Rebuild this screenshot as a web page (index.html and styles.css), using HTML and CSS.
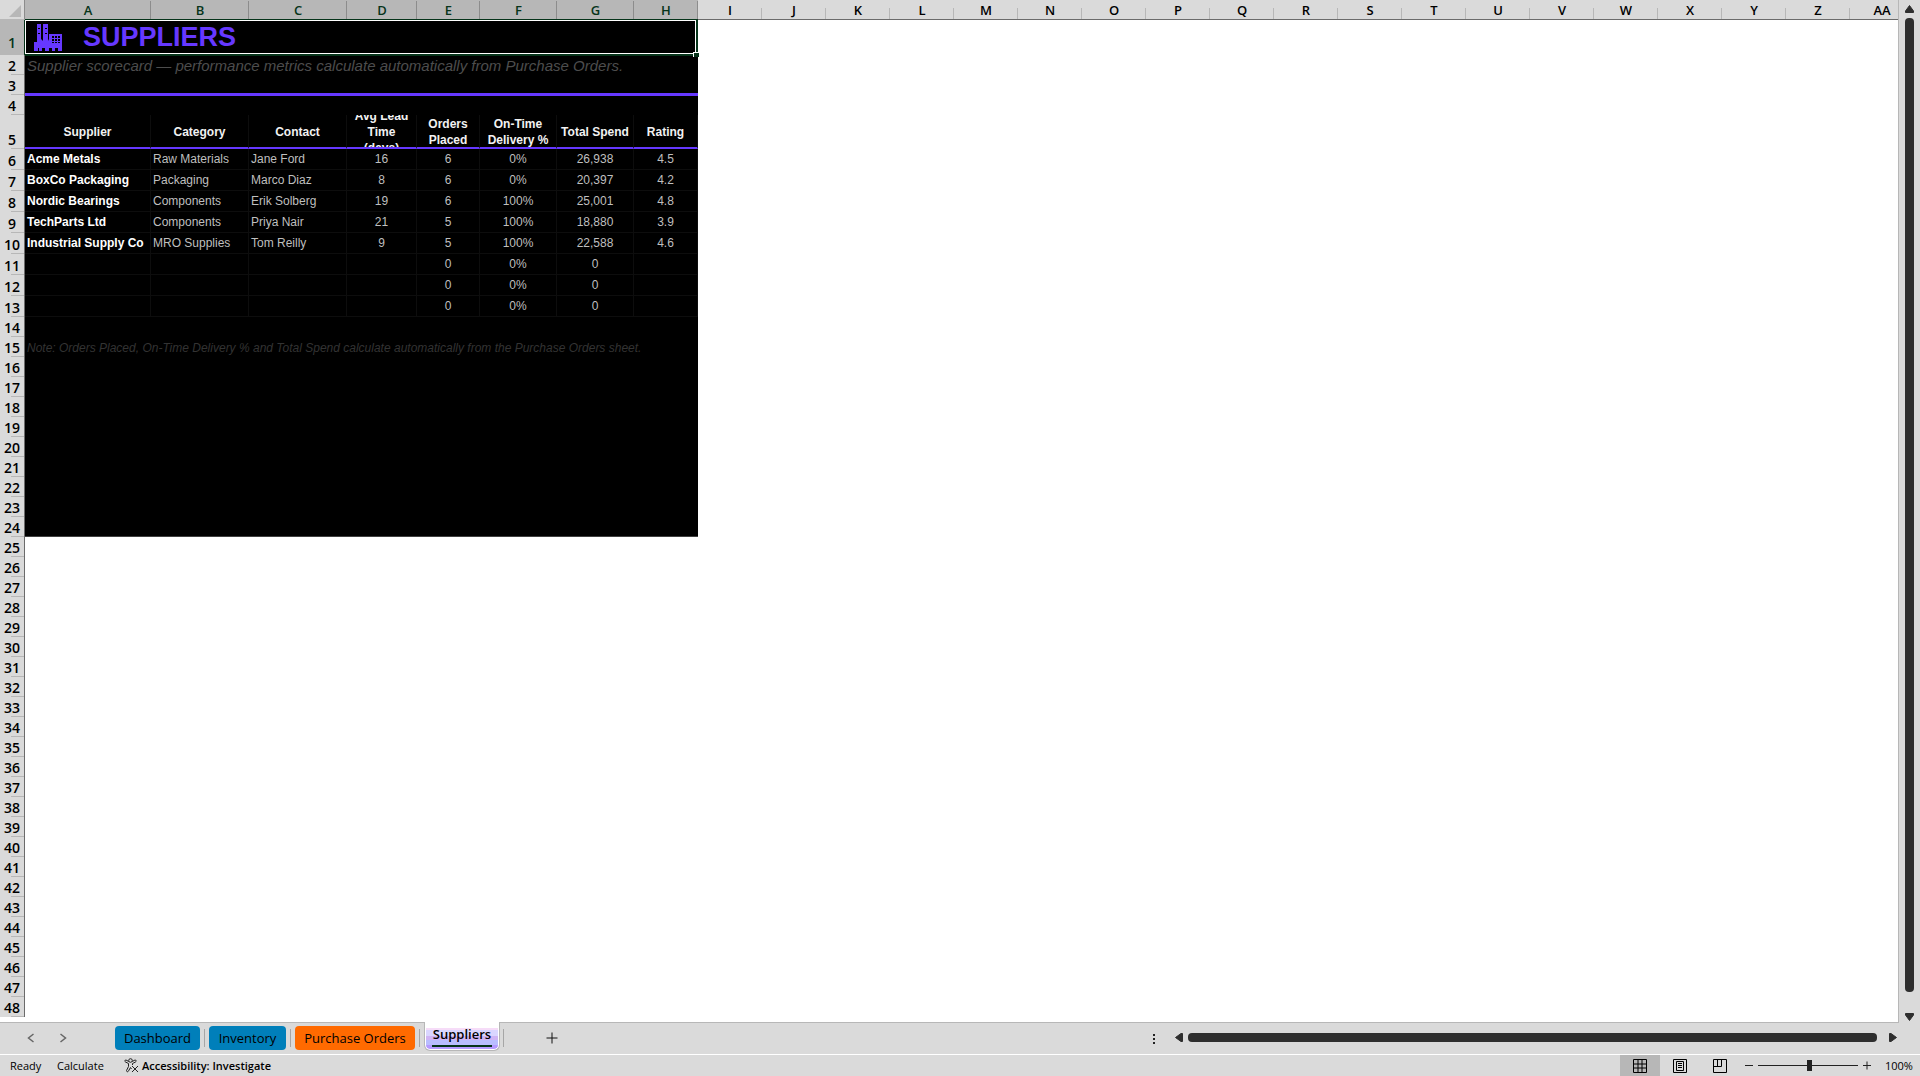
FILE: index.html
```
<!DOCTYPE html>
<html lang="en">
<head>
    <meta charset="UTF-8">
    <meta name="viewport" content="width=device-width, initial-scale=1.0">
    <title>Suppliers</title>
    <link rel="stylesheet" href="styles.css">
</head>
<body>

    <div class="workbook">
        <div class="sheet-area">
            <div class="grid-view">
                <table class="grid">
                    <colgroup id="grid-cols"></colgroup>
                    <thead>
                        <tr id="col-headers"></tr>
                    </thead>
                    <tbody id="grid-body"></tbody>
                </table>
            </div>

            <!-- Vertical scroll bar -->
            <div class="vscroll">
                <button class="arrow" aria-label="Scroll up"><svg width="9" height="8" viewBox="0 0 9 8"><path d="M4.500 0.500L8.500 6V7.500H0.500V6Z"/></svg></button>
                <div class="vthumb"></div>
                <button class="arrow" aria-label="Scroll down"><svg width="9" height="8" viewBox="0 0 9 8"><path d="M4.500 7.500L8.500 2V0.500H0.500V2Z"/></svg></button>
            </div>
        </div>

        <!-- Sheet tabs -->
        <div class="tab-bar">
            <div class="tab-nav">
                <button aria-label="Previous sheet"><svg width="8" height="10" viewBox="0 0 8 10"><path d="M6.500 1L1.500 5L6.500 9"/></svg></button>
                <button aria-label="Next sheet"><svg width="8" height="10" viewBox="0 0 8 10"><path d="M1.500 1L6.500 5L1.500 9"/></svg></button>
            </div>
            <div class="tabs">
                <button class="tab blue dashboard">Dashboard</button>
                <button class="tab blue inventory">Inventory</button>
                <button class="tab orange purchase">Purchase Orders</button>
                <button class="tab active"><span>Suppliers</span></button>
            </div>
            <button class="add-sheet" aria-label="New sheet"><svg width="12" height="12" viewBox="0 0 12 12"><path d="M6 0.500V11.500M0.500 6H11.500"/></svg></button>
            <div class="hscroll">
                <span class="grip"><i></i><i></i><i></i></span>
                <button class="arrow" aria-label="Scroll left"><svg width="8" height="9" viewBox="0 0 8 9"><path d="M0.500 4.500L6 0.500H7.500V8.500H6Z"/></svg></button>
                <div class="hthumb"></div>
                <button class="arrow" aria-label="Scroll right"><svg width="8" height="9" viewBox="0 0 8 9"><path d="M7.500 4.500L2 0.500H0.500V8.500H2Z"/></svg></button>
            </div>
        </div>

        <!-- Status bar -->
        <div class="status-bar">
            <span class="status-ready">Ready</span>
            <span class="status-calc">Calculate</span>
            <button class="accessibility">
                <svg width="15" height="15" viewBox="0 0 15 15"><circle cx="6.500" cy="2.500" r="1.800"/><path d="M4.800 3.500L2 2C0.500 2 0.500 3.500 1.500 4L4.500 5.500V8.500L2.500 12.500C2.500 14 4 14.200 4.500 13L6.500 9.500L7.500 11M8.200 3.500L11 2C12.500 2 12.500 3.500 11.500 4L8.500 5.500V7M8 8L14 14M14 8L8 14"/></svg>
                Accessibility: Investigate
            </button>
            <div class="views">
                <button class="view selected" aria-label="Normal"><svg width="14" height="14" viewBox="0 0 14 14"><path d="M0.500 0.500H13.500V13.500H0.500ZM5 0.500V13.500M9 0.500V13.500M0.500 5H13.500M0.500 9H13.500"/></svg></button>
                <button class="view" aria-label="Page Layout"><svg width="14" height="14" viewBox="0 0 14 14"><path d="M0.500 0.500H13.500V13.500H0.500ZM3.500 2.500H10.500V11.500H3.500ZM5 4.500H9M5 6.500H9M5 8.500H9"/></svg></button>
                <button class="view" aria-label="Page Break Preview"><svg width="14" height="14" viewBox="0 0 14 14"><path d="M0.500 0.500H13.500V13.500H0.500ZM4.500 0.500V7.500M0.500 7.500H8.500V0.500"/></svg></button>
            </div>
            <button class="zoom-btn" aria-label="Zoom out"><svg width="8" height="9" viewBox="0 0 8 9"><path d="M0 4.500H8"/></svg></button>
            <input class="zoom-slider" type="range" min="0" max="100" value="52" aria-label="Zoom">
            <button class="zoom-btn" aria-label="Zoom in"><svg width="8" height="9" viewBox="0 0 8 9"><path d="M0 4.500H8M4 0.500V8.500"/></svg></button>
            <span class="zoom-level">100%</span>
        </div>
    </div>

    <template id="title-icon">
        <svg class="factory" width="28" height="27" viewBox="0 0 28 27">
            <path fill="#6638ff" fill-rule="evenodd" d="M3 0H7V15L9 17V0H14V15L15 17V10H28V27H24V24H21V27H18V24H15V27H11V24H8V27H5V24H4V27H0V18H3ZM4 4V5H6V4ZM4 9V10H6V9ZM11 4V5H13V4ZM11 9V10H13V9ZM18 12V14H20V12ZM21 12V14H23V12ZM24 12V14H26V12ZM18 15V17H20V15ZM21 15V17H23V15ZM24 15V17H26V15ZM18 18V19H20V18ZM21 18V19H23V18ZM24 18V19H26V18Z"/>
        </svg>
    </template>

    <script src="script.js"></script>

</body>
</html>
```
FILE: styles.css
```
* {
    box-sizing: border-box;
}
body {
    margin: 0;
    font-family: "Open Sans", "Noto Sans", sans-serif;
    background-color: #dadada;
    color: #000;
    overflow: hidden;
}
button {
    padding: 0;
    border: none;
    background: none;
    font: inherit;
    color: inherit;
    cursor: pointer;
}
svg {
    display: block;
    fill: none;
    stroke: #222;
}
.workbook {
    display: flex;
    flex-direction: column;
    height: 100vh;
}

/* Grid */
.sheet-area {
    flex: 1;
    min-height: 0;
    display: flex;
}
.grid-view {
    flex: 1;
    min-width: 0;
    overflow: hidden;
    background-color: #fff;
    border-right: 1px solid #b7b7b7;
    border-bottom: 1px solid #b7b7b7;
}
.grid {
    table-layout: fixed;
    width: 1914px;
    border-collapse: separate;
    border-spacing: 0;
}
.grid th, .grid td {
    padding: 0;
    overflow: hidden;
    white-space: nowrap;
}
.row-head-col {
    width: 25px;
}
.grid thead th {
    height: 20px;
    padding-top: 2px;
    font-size: 13px;
    line-height: 17px;
    font-weight: 600;
    background: linear-gradient(#b7b7b7, #b7b7b7) right bottom / 1px 11px no-repeat #dadada;
    border-bottom: 1px solid #6b6b6b;
}
.grid thead th.selected {
    background: linear-gradient(#8c8c8c, #8c8c8c) right bottom / 1px 18px no-repeat #b7b7b7;
    color: #06341a;
    border-bottom-color: #06341a;
}
.grid thead th.corner {
    background: #dadada;
    border-bottom-color: #b7b7b7;
    border-right: 1px solid #8c8c8c;
}
.corner svg {
    margin-left: 9px;
    fill: #b7b7b7;
    stroke: none;
}
.grid .row-head {
    height: 20px;
    padding-bottom: 1px;
    font-size: 14px;
    line-height: 16px;
    font-weight: 600;
    vertical-align: bottom;
    background: linear-gradient(#b7b7b7, #b7b7b7) right bottom / 13px 1px no-repeat #dadada;
    border-right: 1px solid #6b6b6b;
}
.grid .row-head.selected {
    padding-bottom: 4px;
    background-color: #b7b7b7;
    color: #06341a;
    border-right-color: #06341a;
}
.grid tbody tr {
    height: 20px;
}
.grid tbody tr.r1 {
    height: 35px;
}
.grid tbody tr.r5 {
    height: 34px;
}
.grid tbody tr.data {
    height: 21px;
}

/* Supplier report */
.dark {
    background-color: #000;
    font-family: "Liberation Sans", Arial, sans-serif;
}
.grid .title {
    border-right: 2px solid #06341a;
    border-bottom: 1px solid #06341a;
    position: relative;
    overflow: visible;
}
.title-box {
    display: flex;
    align-items: center;
    gap: 21px;
    height: 34px;
    padding-left: 8px;
    border: 1px solid #fff;
}
.title h1 {
    margin: 0;
    font-size: 27px;
    line-height: 32px;
    color: #6638ff;
}
.factory {
    stroke: none;
}
.handle {
    position: absolute;
    right: -3px;
    bottom: -3px;
    width: 6px;
    height: 5px;
    background-color: #06341a;
    border-left: 1px solid #fff;
    border-top: 1px solid #fff;
}
.grid .subtitle {
    padding-left: 2px;
    border-top: 1px solid #06341a;
    font-size: 15px;
    line-height: 18px;
    font-style: italic;
    color: #4d4d4d;
}
.rule {
    border-bottom: 2px solid #6638ff;
}
.rule-end {
    border-top: 1px solid #6638ff;
}
.grid .column-title {
    border-right: 1px solid #0d0d0d;
    border-bottom: 2px solid #6638ff;
    font-size: 12px;
    line-height: 16px;
    font-weight: bold;
    color: #f2f2f2;
    text-align: center;
}
.wrap {
    display: flex;
    align-items: center;
    justify-content: center;
    height: 32px;
    padding-top: 1px;
    overflow: hidden;
}
.cell {
    border-right: 1px solid #0d0d0d;
    border-bottom: 1px solid #0d0d0d;
    font-size: 12px;
    line-height: 16px;
    color: #bfbfbf;
    text-align: center;
}
.grid .cell.text {
    padding-left: 2px;
    text-align: left;
}
.grid .cell.name {
    font-weight: bold;
    color: #fff;
}
.grid .note {
    padding: 2px 0 0 2px;
    font-size: 12px;
    line-height: 16px;
    font-style: italic;
    color: #333;
}
.last {
    border-bottom: 1px solid #404040;
}

/* Scroll bars */
.vscroll {
    width: 21px;
    display: flex;
    flex-direction: column;
    align-items: center;
    gap: 5px;
    padding: 5px 0 2px;
}
.arrow svg {
    fill: #2e2e2e;
    stroke: #2e2e2e;
    stroke-linejoin: round;
}
.vthumb {
    flex: 1;
    width: 9px;
    margin-bottom: 16px;
    border-radius: 4px;
    background-color: #2e2e2e;
}
.hscroll {
    flex: 1;
    display: flex;
    align-items: center;
    justify-content: flex-end;
    padding: 0 23px 2px 0;
}
.grip {
    display: flex;
    flex-direction: column;
    gap: 2px;
    margin: 2px 20px 0 0;
}
.grip i {
    width: 2px;
    height: 2px;
    background-color: #222;
}
.hthumb {
    flex-basis: 689px;
    min-width: 100px;
    height: 9px;
    margin: 0 12px 0 5px;
    border-radius: 4px;
    background-color: #2e2e2e;
}

/* Sheet tabs */
.tab-bar {
    display: flex;
    height: 32px;
    border-bottom: 1px solid #fff;
}
.tab-nav {
    display: flex;
    align-items: center;
    gap: 24px;
    width: 115px;
    padding: 0 0 2px 27px;
}
.tab-nav svg {
    stroke: #666;
    stroke-width: 1.5;
}
.tabs {
    display: flex;
    align-items: flex-start;
    gap: 9px;
}
.tab {
    position: relative;
    height: 24px;
    margin-top: 3px;
    border-radius: 4px;
    font-size: 13px;
    line-height: 24px;
    text-align: center;
}
.tab::after {
    content: "";
    position: absolute;
    top: 3px;
    right: -5px;
    width: 1px;
    height: 18px;
    background-color: #a6a6a6;
}
.blue {
    background-color: #007fba;
}
.orange {
    background-color: #ff6a00;
}
.dashboard {
    width: 85px;
}
.inventory {
    width: 77px;
}
.purchase {
    width: 120px;
}
.active {
    width: 76px;
    height: 29px;
    margin-top: -1px;
    border: 1px solid #b7b7b7;
    border-top: none;
    border-radius: 0 0 6px 6px;
    background: linear-gradient(#fff 6px, #f6dcf8 6px, #f6dcf8 8px, #dad6ff 8px, #dad6ff 14px, #d0b5f5 14px, #d0b5f5 18px, #b9bdff 18px, #b9bdff 23px, #b59aff 23px);
    box-shadow: inset 0 -1px #fff, inset 1px 0 #fff, inset -1px 0 #fff;
    font-weight: 600;
    line-height: 25px;
}
.active::after {
    top: 7px;
}
.active span {
    display: block;
    width: 60px;
    height: 25px;
    margin: 0 auto 3px;
    border-bottom: 2px solid #06341a;
}
.add-sheet {
    margin-left: 46px;
    padding-bottom: 2px;
}
.add-sheet svg {
    stroke: #111;
}

/* Status bar */
.status-bar {
    display: flex;
    align-items: center;
    height: 21px;
    font-size: 11px;
    line-height: 20px;
}
.status-ready {
    width: 57px;
    padding-left: 10px;
}
.status-calc {
    width: 67px;
}
.accessibility {
    display: flex;
    align-items: center;
    gap: 3px;
    font-weight: 600;
}
.views {
    display: flex;
    height: 21px;
    margin-left: auto;
}
.view {
    display: flex;
    align-items: center;
    justify-content: center;
    width: 40px;
}
.view.selected {
    background-color: #b7b7b7;
}
.view svg {
    stroke: #000;
}
.zoom-btn {
    margin: 0 5px;
}
.zoom-slider {
    appearance: none;
    width: 100px;
    height: 12px;
    margin: 0;
    background: linear-gradient(#222, #222) center / 100% 1px no-repeat;
}
.zoom-slider::-webkit-slider-thumb {
    appearance: none;
    width: 5px;
    height: 11px;
    background-color: #222;
}
.zoom-level {
    width: 44px;
    padding-left: 9px;
}
```
FILE: script.js
```
const widths = [126, 98, 98, 70, 63, 77, 77, 64];
const titles = ['Supplier', 'Category', 'Contact', 'Avg Lead<br>Time<br>(days)', 'Orders<br>Placed', 'On-Time<br>Delivery %', 'Total Spend', 'Rating'];
const suppliers = [
    ['Acme Metals', 'Raw Materials', 'Jane Ford', '16', '6', '0%', '26,938', '4.5'],
    ['BoxCo Packaging', 'Packaging', 'Marco Diaz', '8', '6', '0%', '20,397', '4.2'],
    ['Nordic Bearings', 'Components', 'Erik Solberg', '19', '6', '100%', '25,001', '4.8'],
    ['TechParts Ltd', 'Components', 'Priya Nair', '21', '5', '100%', '18,880', '3.9'],
    ['Industrial Supply Co', 'MRO Supplies', 'Tom Reilly', '9', '5', '100%', '22,588', '4.6'],
    ['', '', '', '', '0', '0%', '0', ''],
    ['', '', '', '', '0', '0%', '0', ''],
    ['', '', '', '', '0', '0%', '0', '']
];

// Column headers A to AA
let cols = '<col class="row-head-col">';
let heads = '<th class="corner"><svg width="12" height="12" viewBox="0 0 12 12"><path d="M12 0V12H0Z"/></svg></th>';
for (let i = 0; i < 27; i++) {
    const name = i < 26 ? String.fromCharCode(65 + i) : 'AA';
    cols += `<col style="width: ${widths[i] || 64}px">`;
    heads += `<th class="${i < 8 ? 'selected' : ''}">${name}</th>`;
}
document.getElementById('grid-cols').innerHTML = cols;
document.getElementById('col-headers').innerHTML = heads;

// Content of one row
function rowCells(n) {
    if (n === 1) {
        const icon = document.getElementById('title-icon').innerHTML;
        return `<td class="dark title" colspan="8"><div class="title-box">${icon}<h1>SUPPLIERS</h1></div><span class="handle"></span></td>`;
    }
    if (n === 2) {
        return '<td class="dark subtitle" colspan="8">Supplier scorecard — performance metrics calculate automatically from Purchase Orders.</td>';
    }
    if (n === 3) {
        return '<td class="dark rule" colspan="8"></td>';
    }
    if (n === 4) {
        return '<td class="dark rule-end" colspan="8"></td>';
    }
    if (n === 5) {
        return titles.map(t => `<td class="dark column-title"><div class="wrap"><span>${t}</span></div></td>`).join('');
    }
    if (n >= 6 && n <= 13) {
        return suppliers[n - 6].map((v, i) => `<td class="dark cell ${i < 3 ? 'text' : ''} ${i === 0 ? 'name' : ''}">${v}</td>`).join('');
    }
    if (n === 15) {
        return '<td class="dark note" colspan="8">Note: Orders Placed, On-Time Delivery % and Total Spend calculate automatically from the Purchase Orders sheet.</td>';
    }
    if (n <= 24) {
        return `<td class="dark ${n === 24 ? 'last' : ''}" colspan="8"></td>`;
    }
    return '<td colspan="8"></td>';
}

let rows = '';
for (let n = 1; n <= 48; n++) {
    rows += `<tr class="r${n} ${n >= 6 && n <= 13 ? 'data' : ''}"><th class="row-head ${n === 1 ? 'selected' : ''}">${n}</th>${rowCells(n)}</tr>`;
}
document.getElementById('grid-body').innerHTML = rows;
```
